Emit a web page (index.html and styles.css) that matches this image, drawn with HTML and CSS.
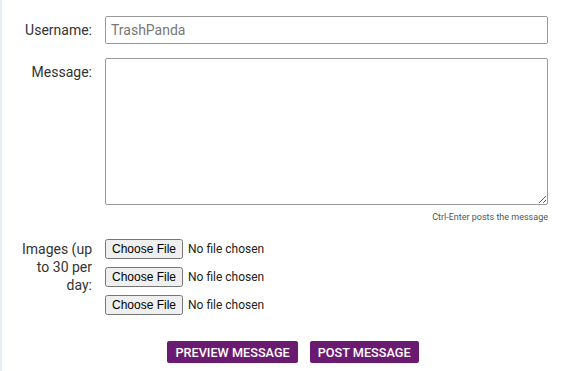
FILE: index.html
```html
<!DOCTYPE html>
<html lang="en">
<head>
    <meta charset="UTF-8">
    <meta name="viewport" content="width=device-width, initial-scale=1.0">
    <title>Post Message</title>
    <link rel="stylesheet" href="styles.css">
</head>
<body>
    <div class="page">
        <form id="post-form" class="post-form">
            <div class="form-row">
                <label for="username" class="form-label">Username:</label>
                <input type="text" id="username" name="username" class="input-field" value="TrashPanda">
            </div>
            <div class="form-row">
                <label for="message" class="form-label label-top">Message:</label>
                <div class="field-col">
                    <textarea id="message" name="message" class="message-field"></textarea>
                    <div class="hint">Ctrl-Enter posts the message</div>
                </div>
            </div>
            <div class="form-row images-row">
                <label class="form-label label-top">Images (up to 30 per day:</label>
                <div class="file-list">
                    <input type="file" name="image1" class="file-field">
                    <input type="file" name="image2" class="file-field">
                    <input type="file" name="image3" class="file-field">
                </div>
            </div>
            <div class="button-container">
                <button type="button" class="action-button">Preview Message</button>
                <button type="submit" class="action-button">Post Message</button>
            </div>
        </form>
    </div>
</body>
</html>
```

FILE: styles.css
```css
body {
    margin: 0;
    font-family: Roboto, "Liberation Sans", sans-serif;
    font-size: 14px;
    color: #333;
    background: #fff;
}
.page {
    border-left: 2px solid #e7edf8;
    min-height: 371px;
    box-sizing: border-box;
    padding-top: 16px;
}
.post-form {
    width: 546px;
}
.form-row {
    display: flex;
    align-items: center;
    margin-bottom: 14px;
}
.form-label {
    width: 72px;
    margin-left: 18px;
    margin-right: 13px;
    text-align: right;
    line-height: 18px;
}
.label-top {
    align-self: flex-start;
    padding-top: 5px;
}
.field-col {
    flex: 1;
}
.input-field {
    flex: 1;
    height: 28px;
    box-sizing: border-box;
    padding: 3px 5px;
    border: 1px solid #999;
    border-radius: 2px;
    font-family: inherit;
    font-size: 14px;
    color: #777;
}
.message-field {
    display: block;
    width: 100%;
    height: 147px;
    box-sizing: border-box;
    border: 1px solid #999;
    border-radius: 2px;
    font-family: inherit;
    font-size: 14px;
    margin: 0;
}
.hint {
    text-align: right;
    font-size: 9px;
    color: #555;
    margin-top: 7px;
}
.images-row {
    margin-top: 17px;
}
.images-row .form-label {
    padding-top: 1px;
}
.file-list {
    display: flex;
    flex-direction: column;
    gap: 8px;
}
.file-field {
    font-family: Roboto, "Liberation Sans", sans-serif;
    font-size: 12px;
    color: #222;
}
.file-field::file-selector-button {
    font-family: "Liberation Sans", Arial, sans-serif;
    font-size: 12px;
    padding: 1px 5px;
    margin-right: 5px;
}
.button-container {
    display: flex;
    justify-content: center;
    gap: 12px;
    padding-left: 36px;
    margin-top: 26px;
}
.action-button {
    height: 22px;
    padding: 0 8px;
    border: none;
    border-radius: 2px;
    background-color: #6b1a72;
    color: white;
    font-family: inherit;
    font-size: 12.7px;
    font-weight: 500;
    text-transform: uppercase;
    cursor: pointer;
}
```
